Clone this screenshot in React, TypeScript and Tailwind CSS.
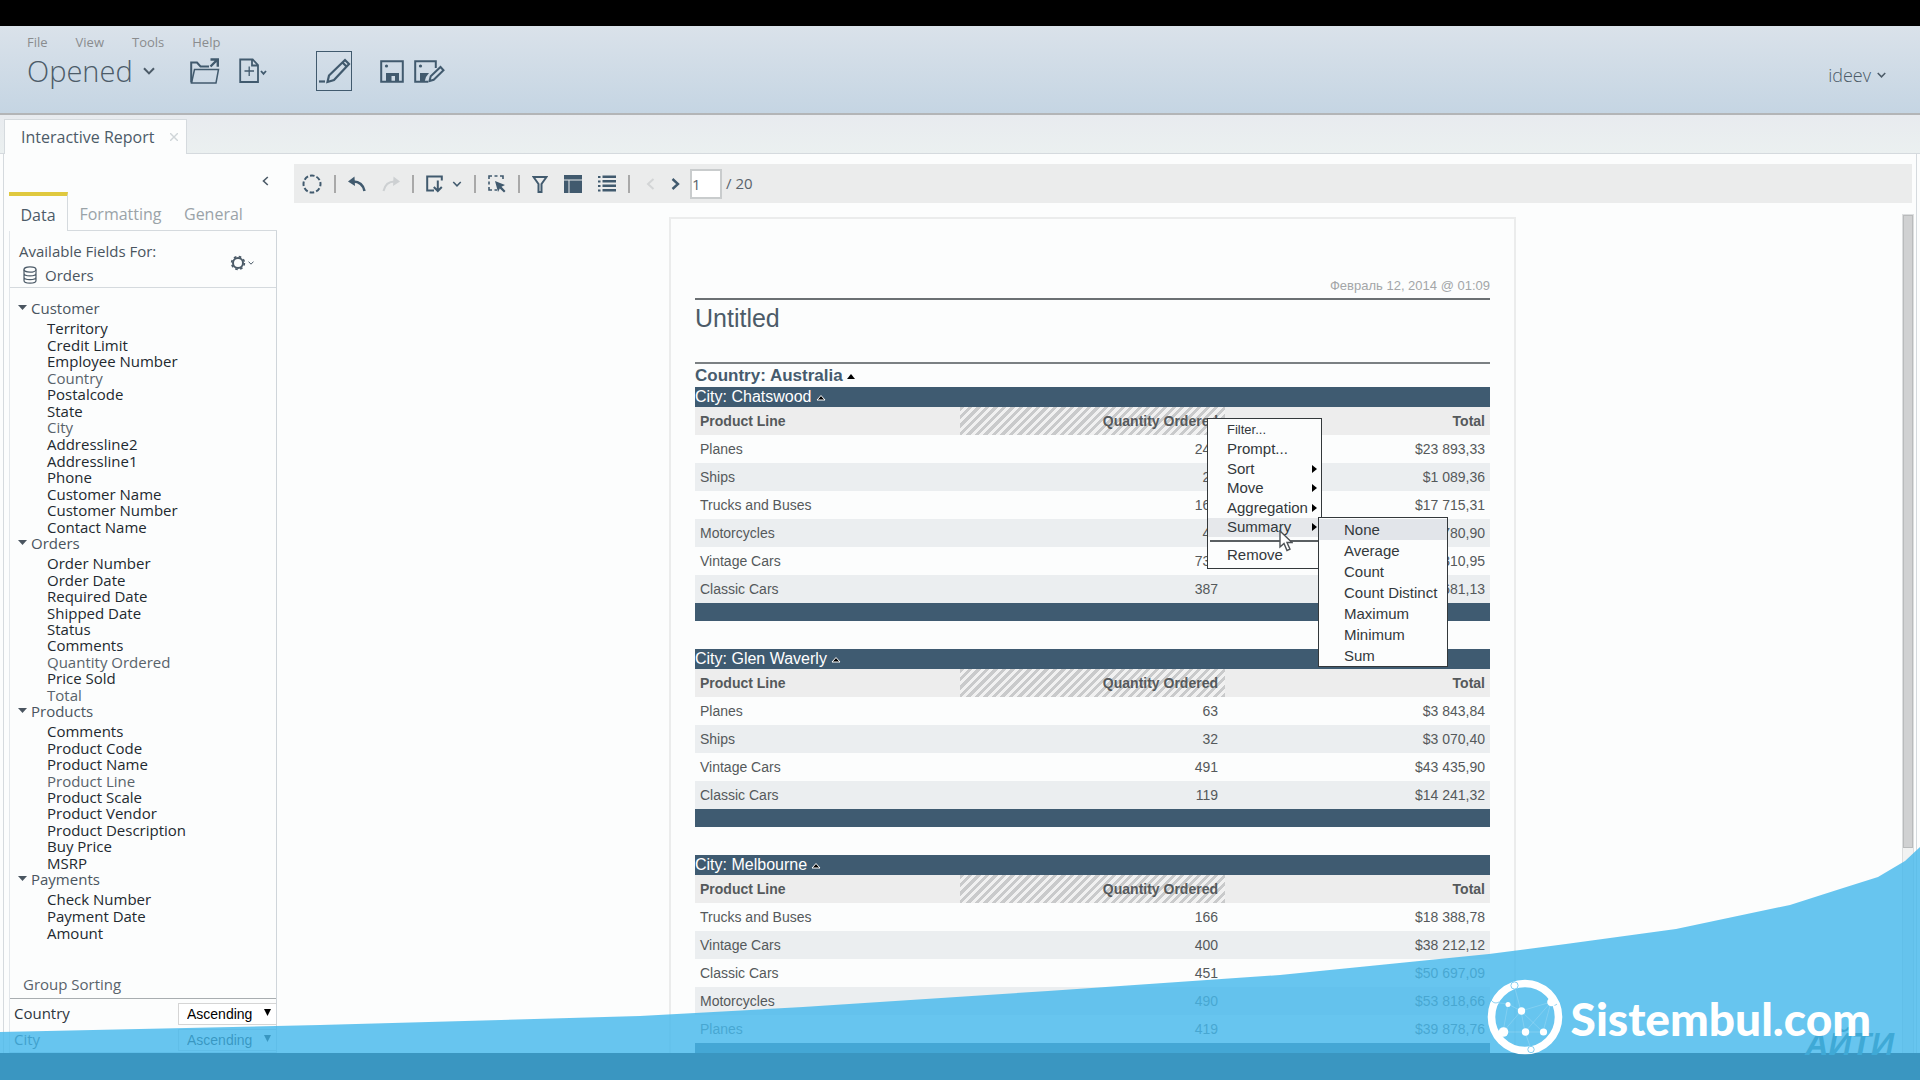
import type { ReactNode } from "react";

interface FieldGroup {
  name: string;
  listClass: string;
  fields: string[];
}

interface CityReport {
  city: string;
  rows: [string, string, string][];
}

// fields already placed on the report are drawn lighter
const usedFields = ["Country", "City", "Quantity Ordered", "Total", "Product Line"];

const fieldGroups: FieldGroup[] = [
  {
    name: "Customer",
    listClass: "h-[215px]",
    fields: [
      "Territory", "Credit Limit", "Employee Number", "Country", "Postalcode", "State", "City",
      "Addressline2", "Addressline1", "Phone", "Customer Name", "Customer Number", "Contact Name",
    ],
  },
  {
    name: "Orders",
    listClass: "h-[148px]",
    fields: [
      "Order Number", "Order Date", "Required Date", "Shipped Date", "Status", "Comments",
      "Quantity Ordered", "Price Sold", "Total",
    ],
  },
  {
    name: "Products",
    listClass: "h-[148px]",
    fields: [
      "Comments", "Product Code", "Product Name", "Product Line", "Product Scale", "Product Vendor",
      "Product Description", "Buy Price", "MSRP",
    ],
  },
  { name: "Payments", listClass: "h-[50px]", fields: ["Check Number", "Payment Date", "Amount"] },
];

const cities: CityReport[] = [
  {
    city: "Chatswood",
    rows: [
      ["Planes", "245", "$23 893,33"],
      ["Ships", "20", "$1 089,36"],
      ["Trucks and Buses", "168", "$17 715,31"],
      ["Motorcycles", "45", "$4 780,90"],
      ["Vintage Cars", "731", "$64 310,95"],
      ["Classic Cars", "387", "$39 681,13"],
    ],
  },
  {
    city: "Glen Waverly",
    rows: [
      ["Planes", "63", "$3 843,84"],
      ["Ships", "32", "$3 070,40"],
      ["Vintage Cars", "491", "$43 435,90"],
      ["Classic Cars", "119", "$14 241,32"],
    ],
  },
  {
    city: "Melbourne",
    rows: [
      ["Trucks and Buses", "166", "$18 388,78"],
      ["Vintage Cars", "400", "$38 212,12"],
      ["Classic Cars", "451", "$50 697,09"],
      ["Motorcycles", "490", "$53 818,66"],
      ["Planes", "419", "$39 878,76"],
    ],
  },
];

const contextItems = [
  { label: "Filter...", small: true },
  { label: "Prompt..." },
  { label: "Sort", sub: true },
  { label: "Move", sub: true },
  { label: "Aggregation", sub: true },
  { label: "Summary", sub: true, active: true },
];

const summaryItems = ["None", "Average", "Count", "Count Distinct", "Maximum", "Minimum", "Sum"];

const Chevron = ({ className }: { className: string }) => (
  <svg viewBox="0 0 12 8" className={className} fill="none" stroke="currentColor" strokeWidth="2">
    <path d="M1 1.2 6 6.4 11 1.2" />
  </svg>
);

const IconButton = ({ label, children }: { label: string; children: ReactNode }) => (
  <button type="button" aria-label={label} className="flex shrink-0 items-center">
    {children}
  </button>
);

const Separator = () => <span className="h-[18px] w-0.5 bg-[#a9a9a9]" />;

const Header = () => (
  <header className="flex h-[89px] shrink-0 justify-between border-b-2 border-[#b3b5b7] bg-linear-to-b from-[#dae2ea] to-[#c5d5e3] text-[#4c5b68]">
    <div className="pl-[27px]">
      <nav className="flex gap-7 pt-[7px] text-[13px] leading-[18px] text-[#8a8c8e]">
        <a href="#file">File</a>
        <a href="#view">View</a>
        <a href="#tools">Tools</a>
        <a href="#help">Help</a>
      </nav>
      <div className="flex h-10 items-center text-[#415a6e]">
        <button type="button" className="flex w-[163px] items-center gap-2.5 text-[29px] leading-9 font-light text-[#4c5b68]">
          Opened
          <Chevron className="h-2 w-3" />
        </button>
        <div className="flex items-center gap-[19px]">
          <IconButton label="Open">
            <svg viewBox="0 0 30 27" className="h-[27px] w-[30px]" fill="none" stroke="currentColor" strokeWidth="2">
              <path d="M1.2 24.500V4.500H7l3.500 4H19" />
              <path d="M1.500 25 4.500 11.500h24L26 25z" strokeWidth="1.500" />
              <path d="M20.500 8.500 27 2M20.500 1.500h7.300v7.300" strokeWidth="2.400" />
            </svg>
          </IconButton>
          <IconButton label="New">
            <svg viewBox="0 0 28 26" className="h-[26px] w-7" fill="none" stroke="currentColor" strokeWidth="2">
              <path d="M1.200 1.500h12.500L19 7v17H1.200zM13 1.500V7.500h6" strokeWidth="1.800" />
              <path d="M5.500 13h9.500M10.200 8.500v9.500" strokeWidth="1.300" />
              <path d="m22 13 2.500 2.800L27 13" strokeWidth="1.800" />
            </svg>
          </IconButton>
        </div>
        <button type="button" aria-label="Design mode" className="ml-[49px] flex h-10 w-9 shrink-0 items-center border border-[#415a6e]">
          <svg viewBox="0 0 34 38" className="h-[38px] w-[34px]" fill="none" stroke="currentColor" strokeWidth="2.200">
            <path d="M2 29.500h6" />
            <path d="m10.500 30 1.500-6.500L28 8l4 4L17 28zM25.500 10.500l4 4" />
          </svg>
        </button>
        <div className="ml-7 flex items-center gap-2.5">
          <IconButton label="Save">
            <svg viewBox="0 0 24 23" className="h-[23px] w-6" fill="none" stroke="currentColor" strokeWidth="2">
              <path d="M1.200 1.200h21.600v20.600H1.200z" />
              <circle cx="6.500" cy="6" r="1.600" fill="currentColor" stroke="none" />
              <path d="M6 13h13v9h-4v-6h-3.500v6H6z" fill="currentColor" stroke="none" />
            </svg>
          </IconButton>
          <IconButton label="Save as">
            <svg viewBox="0 0 31 23" className="h-[23px] w-[31px]" fill="none" stroke="currentColor" strokeWidth="2">
              <path d="M14 21.800H1.200V1.200h20.600V8" />
              <circle cx="6.500" cy="6" r="1.600" fill="currentColor" stroke="none" />
              <path d="M6 13h9l-3 4-1.500 5H6z" fill="currentColor" stroke="none" />
              <path d="m15.500 21 1.200-4.800L26.500 7l3 3.200-9.800 9.600z" />
            </svg>
          </IconButton>
        </div>
      </div>
    </div>
    <button type="button" className="mt-[37px] mr-[34px] flex h-6 items-center gap-1.5 text-lg font-light">
      ideev
      <Chevron className="h-1.5 w-[9px]" />
    </button>
  </header>
);

const Sidebar = () => (
  <aside className="flex w-[268px] shrink-0 flex-col">
    <div className="flex h-[38px] items-start justify-end pt-[22px] pr-2">
      <button type="button" aria-label="Collapse panel" className="text-[#4c5b68]">
        <svg viewBox="0 0 7 10" className="block h-2.5 w-[7px]" fill="none" stroke="currentColor" strokeWidth="1.600">
          <path d="M5.800 1 1.500 5l4.300 4" />
        </svg>
      </button>
    </div>
    <div className="flex h-[39px] text-base text-[#9aa3a8]">
      <button type="button" className="w-[59px] border-t-4 border-r border-t-[#e0c93f] border-r-[#d5dade] pt-0.5 text-[#4c5b68]">Data</button>
      <button type="button" className="w-[105px] border-b border-[#d5dade] pt-1.5">Formatting</button>
      <button type="button" className="flex-1 border-b border-[#d5dade] pt-1.5 pl-[11px] text-left">General</button>
    </div>
    <div className="flex h-[822px] flex-col border-x border-b border-[#cfd5da] border-l-[#e2e6ea]">
      <div className="flex h-[57px] shrink-0 items-center justify-between border-b border-[#d5dade] pt-[7px] pr-[22px] pl-[9px] text-[15px] leading-6 text-[#4a5560]">
        <div>
          <div>Available Fields For:</div>
          <div className="flex items-center gap-2">
            <svg viewBox="0 0 14 18" className="ml-1 h-[18px] w-3.5" fill="none" stroke="#4c5b68" strokeWidth="1.200">
              <ellipse cx="7" cy="3.500" rx="6" ry="2.700" />
              <path d="M1 3.500v11c0 3.600 12 3.600 12 0v-11M1 7.200c0 3.600 12 3.600 12 0M1 10.900c0 3.600 12 3.600 12 0" />
            </svg>
            Orders
          </div>
        </div>
        <button type="button" aria-label="Field options" className="flex items-center gap-0.5 text-[#4c5b68]">
          <svg viewBox="0 0 16 16" className="h-4 w-4" fill="none" stroke="currentColor">
            <circle cx="8" cy="8" r="5" strokeWidth="2" />
            <circle cx="8" cy="8" r="6.400" strokeWidth="1.600" strokeDasharray="2.600 2.427" />
          </svg>
          <Chevron className="h-1 w-1.5" />
        </button>
      </div>
      <div className="flex-1 pt-3 text-[15px] text-[#22292f]">
        {fieldGroups.map((group) => (
          <section key={group.name}>
            <h3 className="flex h-5 items-start gap-1 pl-2 leading-4 text-[#4a5560]">
              <svg viewBox="0 0 9 5" className="mt-[5px] h-[5px] w-[9px]" fill="currentColor">
                <path d="M0 0h9L4.500 5z" />
              </svg>
              {group.name}
            </h3>
            <ul className={`grid auto-rows-fr items-center pl-[37px] leading-4 ${group.listClass}`}>
              {group.fields.map((field) => (
                <li key={field} className={usedFields.includes(field) ? "text-[#59636b]" : undefined}>
                  {field}
                </li>
              ))}
            </ul>
          </section>
        ))}
      </div>
      <div className="flex h-7 shrink-0 items-center border-b border-[#a8adb0] pl-[13px] text-[15px] text-[#59636b]">Group Sorting</div>
      <div className="shrink-0 pt-px">
        {["Country", "City"].map((name) => (
          <div key={name} className="flex h-[26px] items-center justify-between pl-1 text-[15px] text-[#2e363d]">
            <label htmlFor={`sort-${name}`}>{name}</label>
            <div className="relative h-[22px] w-[98px]">
              <select
                id={`sort-${name}`}
                className="h-full w-full appearance-none border border-r-0 border-[#d5d5d5] bg-white pl-2 font-['Liberation_Sans',sans-serif] text-sm leading-4 text-black"
              >
                <option>Ascending</option>
                <option>Descending</option>
              </select>
              <svg viewBox="0 0 7 7" className="pointer-events-none absolute top-[7px] right-[5px] h-[7px] w-[7px]">
                <path d="M0 0h7L3.500 7z" />
              </svg>
            </div>
          </div>
        ))}
      </div>
    </div>
  </aside>
);

const ReportToolbar = () => (
  <div className="mr-1 ml-[17px] flex h-[39px] shrink-0 items-center gap-3 bg-[#ebecec] pl-2 text-[#415a6e]">
    <IconButton label="Refresh">
      <svg viewBox="0 0 20 20" className="h-5 w-5" fill="none" stroke="currentColor" strokeWidth="2">
        <circle cx="10" cy="10" r="8.500" strokeDasharray="4.600 2.076" strokeDashoffset="2.300" />
      </svg>
    </IconButton>
    <Separator />
    <div className="flex gap-4">
      <IconButton label="Undo">
        <svg viewBox="0 0 18 16" className="h-4 w-[18px]" fill="none" stroke="currentColor" strokeWidth="2.600">
          <path d="M4 5.500c7-.5 11 2.500 12.500 9.500" />
          <path d="M0 5.500 6.500.5 7 10z" fill="currentColor" stroke="none" />
        </svg>
      </IconButton>
      <IconButton label="Redo">
        <svg viewBox="0 0 18 16" className="h-4 w-[18px] text-[#cdd0d2]" fill="none" stroke="currentColor" strokeWidth="2">
          <path d="M14 5.500C7 5 3 8 1.500 15" />
          <path d="M18 5.500 11.500.5 11 10z" fill="currentColor" stroke="none" />
        </svg>
      </IconButton>
    </div>
    <Separator />
    <div className="flex items-center gap-2">
      <IconButton label="Export">
        <svg viewBox="0 0 18 18" className="h-[18px] w-[18px]" fill="none" stroke="currentColor" strokeWidth="2">
          <path d="M8 15.500H1.200V1.500h14.600v4" />
          <path d="M11.800 5.500V16M7.800 12l4 4 4-4" />
        </svg>
      </IconButton>
      <IconButton label="Export formats">
        <Chevron className="h-1.5 w-2.5" />
      </IconButton>
    </div>
    <Separator />
    <IconButton label="Select">
      <svg viewBox="0 0 18 18" className="h-[18px] w-[18px]" fill="none" stroke="currentColor" strokeWidth="1.600">
        <path d="M1 4V1h3M6.500 1h3M12 1h3v3M1 6.500v3M1 12v3h3M6.500 15H9" />
        <path d="m7 6 10 4-3.500 1.800L17.500 16 16 17.500l-4.200-4L10 17z" fill="currentColor" stroke="none" />
      </svg>
    </IconButton>
    <Separator />
    <div className="flex gap-4">
      <IconButton label="Filter">
        <svg viewBox="0 0 16 18" className="h-[18px] w-4" fill="none" stroke="currentColor" strokeWidth="2">
          <path d="M1.500 2h13L9.500 9v8h-3V9z" />
        </svg>
      </IconButton>
      <IconButton label="Table layout">
        <svg viewBox="0 0 18 18" className="h-[18px] w-[18px]" fill="currentColor">
          <path d="M0 0h18v4.500H0zM0 5.500h4.500V18H0zM5.500 5.500H18V18H5.500z" />
        </svg>
      </IconButton>
      <IconButton label="Columns">
        <svg viewBox="0 0 18 18" className="h-[18px] w-[18px]" fill="currentColor">
          <path d="M0 1h2.500v2H0zM0 5.500h2.500v2H0zM0 10h2.500v2H0zM0 14.500h2.500v2H0zM4.500.5H18v2.500H4.500zM4.500 5H18v2.500H4.500zM4.500 9.500H18V12H4.500zM4.500 14H18v2.500H4.500z" />
        </svg>
      </IconButton>
    </div>
    <Separator />
    <div className="ml-1 flex items-center">
      <IconButton label="Previous page">
        <svg viewBox="0 0 9 12" className="h-3 w-[9px] text-[#d3d5d6]" fill="none" stroke="currentColor" strokeWidth="2">
          <path d="M7.500 1 2 6l5.500 5" />
        </svg>
      </IconButton>
      <button type="button" aria-label="Next page" className="mr-2.5 ml-4">
        <svg viewBox="0 0 9 12" className="h-3 w-[9px]" fill="none" stroke="currentColor" strokeWidth="2.400">
          <path d="m1.500 1 5.500 5-5.500 5" />
        </svg>
      </button>
      <input
        aria-label="Page"
        defaultValue="1"
        className="mr-1 h-[30px] w-8 border-2 border-[#c9cccd] bg-white text-[15px] text-[#59636b]"
      />
      <span className="text-[15px] text-[#59636b]">/ 20</span>
    </div>
  </div>
);

const CityTable = ({ city, rows }: CityReport) => (
  <table className="mb-7 w-full table-fixed border-collapse text-sm leading-4 text-[#55595b]">
    <caption className="h-5 bg-[#3f5b71] text-left text-base leading-5 text-white">
      City: {city}
      <svg viewBox="0 0 10 8" className="ml-1 inline-block h-2 w-2.5 align-baseline" stroke="white">
        <path d="M1 6h8L5 1.500z" />
      </svg>
    </caption>
    <thead>
      <tr className="h-7 bg-[#ededed]">
        <th className="px-[5px] py-0 text-left">Product Line</th>
        <th className="bg-[repeating-linear-gradient(135deg,#c9cacb_0,#c9cacb_3px,#f1f1f1_3px,#f1f1f1_6px)] px-[7px] py-0 text-right">
          Quantity Ordered
        </th>
        <th className="px-[5px] py-0 text-right">Total</th>
      </tr>
    </thead>
    <tbody>
      {rows.map(([line, quantity, total]) => (
        <tr key={line} className="h-7 even:bg-[#ebeef0]">
          <td className="px-[5px] py-0">{line}</td>
          <td className="px-[7px] py-0 text-right">{quantity}</td>
          <td className="px-[5px] py-0 text-right">{total}</td>
        </tr>
      ))}
    </tbody>
    <tfoot>
      <tr className="h-[18px] bg-[#3f5b71]">
        <td colSpan={3} className="p-0" />
      </tr>
    </tfoot>
  </table>
);

const SubArrow = () => (
  <svg viewBox="0 0 5 8" className="h-2 w-[5px]">
    <path d="M0 0v8l5-4z" />
  </svg>
);

const ContextMenu = () => (
  <div className="absolute top-[199px] left-[536px] w-[115px] border border-[#33383b] bg-[#fcfdfd] text-[15px] text-[#33383b]">
    <ul className="mt-px grid h-[117px] auto-rows-fr">
      {contextItems.map((item) => (
        <li key={item.label} className={item.active ? "bg-[#e6e8eb]" : undefined}>
          <button
            type="button"
            className={`flex h-full w-full items-center justify-between pr-1 pl-[19px] leading-5 ${item.small ? "text-[13px]" : ""}`}
          >
            {item.label}
            {item.sub && <SubArrow />}
          </button>
        </li>
      ))}
    </ul>
    <div className="mx-0.5 mt-[3px] border-t-2 border-[#5a5f62]" />
    <button type="button" className="block h-[26px] w-full pl-[19px] text-left leading-5">Remove</button>
    <ul className="absolute top-[98px] left-[110px] w-[130px] border border-[#33383b] bg-[#fcfdfd] pt-px font-['Liberation_Sans',sans-serif]">
      {summaryItems.map((label) => (
        <li key={label} className="first:bg-[#e2e5ea]">
          <button type="button" className="block h-[21px] w-full pl-[25px] text-left leading-5">{label}</button>
        </li>
      ))}
    </ul>
    <svg viewBox="0 0 14 22" className="absolute top-[111px] left-[71px] h-[22px] w-3.5">
      <path d="M1 1v16l4-3.500 3 7 3-1.300-3-6.700h5z" fill="white" stroke="#4c5155" strokeWidth="1.400" />
    </svg>
  </div>
);

const ReportPage = () => (
  <article className="relative mx-auto h-full w-[847px] border-2 border-[#ebecec] px-6 pt-[59px] font-['Liberation_Sans',sans-serif] text-[#4c5b68]">
    <div className="h-[22px] border-b-2 border-[#6b7073] text-right text-[13px] leading-4 text-[#a3a6a8]">Февраль 12, 2014 @ 01:09</div>
    <h1 className="h-16 border-b-2 border-[#7b8083] pt-0.5 text-[25px] leading-8">Untitled</h1>
    <h2 className="flex h-[23px] items-end gap-1 text-[17px] leading-[22px] font-bold text-[#465b6d]">
      Country: Australia
      <svg viewBox="0 0 8 5" className="mb-2 h-[5px] w-2">
        <path d="M0 5h8L4 0z" />
      </svg>
    </h2>
    {cities.map((report) => (
      <CityTable key={report.city} {...report} />
    ))}
    <ContextMenu />
  </article>
);

const Banner = () => (
  <div className="pointer-events-none absolute inset-x-0 bottom-0 h-[233px]">
    <svg viewBox="0 0 1920 206" preserveAspectRatio="none" className="h-[206px] w-full">
      <path
        d="M0 185 320 178 640 169 803 160 1048 144 1280 128 1489 107 1566 97 1676 82 1790 58 1840 42 1878 30 1905 14 1920 0V206H0z"
        fill="#46b8eb"
        fillOpacity="0.82"
      />
    </svg>
    <div className="h-[27px] bg-[#3a96c1]" />
    <div className="absolute right-[26px] bottom-[20px] font-['Liberation_Sans',sans-serif] text-[32px] leading-8 font-bold text-[#3fa9d6] italic">АЙТИ</div>
    <div className="absolute right-[49px] bottom-[25px] flex items-center gap-2 text-white">
      <svg viewBox="0 0 76 76" className="h-[76px] w-[76px]" fill="white">
        <circle cx="38" cy="38" r="33.500" fill="none" stroke="white" strokeWidth="7.600" />
        <path
          d="M27 6 34 32 38 53 44 70M34 32 16 53M21 25 16 53H56L64 23 34 32M38 53 64 23M5 23 21 25 34 32 56 53"
          fill="none"
          stroke="white"
          strokeOpacity="0.250"
          strokeWidth="0.700"
        />
        <g stroke="#66c3ed" strokeWidth="0.800">
          <circle cx="27.500" cy="6.500" r="3.600" />
          <circle cx="44" cy="70.500" r="3.200" />
          <path d="M4 21c3 4 6 3 8 2M70 25c-2 2-4 1-5-1" fill="none" />
        </g>
        <circle cx="64.500" cy="23" r="4.300" />
        <circle cx="21" cy="25.500" r="2.500" />
        <circle cx="34.500" cy="32" r="3.700" />
        <circle cx="16.500" cy="53" r="4.800" />
        <circle cx="38.500" cy="53" r="3.700" />
        <circle cx="56.500" cy="53" r="3.600" />
      </svg>
      <span className="pt-1 font-['Lato',sans-serif] text-[46px] leading-[50px] font-black">Sistembul.com</span>
    </div>
  </div>
);

const App = () => (
  <div className="relative flex h-screen flex-col overflow-hidden bg-[#fcfdfd] font-['Open_Sans',sans-serif]">
    <div className="h-[26px] shrink-0 bg-black" />
    <Header />
    <div className="flex h-[39px] shrink-0 border-b border-[#d5dade] bg-linear-to-b from-[#e8ebef] to-[#ebf0f0] pl-1">
      <div className="mt-1 -mb-px flex w-[183px] items-center justify-between border border-b-0 border-[#d5dade] bg-[#fcfdfd] pr-2 pl-4 text-base text-[#4c5b68]">
        Interactive Report
        <button type="button" aria-label="Close tab">
          <svg viewBox="0 0 8 8" className="h-2 w-2" stroke="#cfd5d8" strokeWidth="1.400">
            <path d="m0 0 8 8M8 0 0 8" />
          </svg>
        </button>
      </div>
    </div>
    <div className="mr-[3px] ml-[3px] flex min-h-0 flex-1 border-x border-[#d5dade] pl-[5px]">
      <Sidebar />
      <main className="flex min-w-0 flex-1 flex-col pt-2.5">
        <ReportToolbar />
        <div className="flex min-h-0 flex-1 pt-[11px]">
          <div className="min-w-0 flex-1 overflow-hidden pt-[3px] pl-1.5">
            <ReportPage />
          </div>
          <div className="mr-0.5 w-3 border border-[#dcdedf] bg-[#f1f2f2]">
            <div className="h-[633px] border border-[#b9bbbc] bg-[#d0d1d2]" />
          </div>
        </div>
      </main>
    </div>
    <Banner />
  </div>
);

export default App;
